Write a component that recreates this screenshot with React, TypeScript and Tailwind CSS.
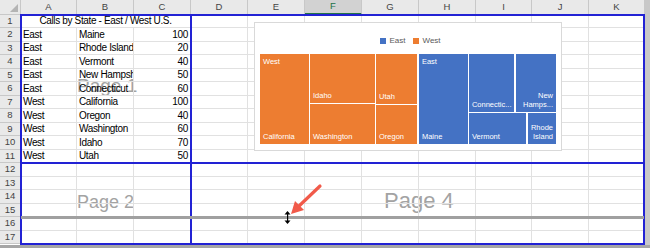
import React from 'react';

const colWidths = ['w-[56px]', 'w-[57px]', 'w-[57px]', 'w-[57px]', 'w-[57px]', 'w-[57px]', 'w-[57px]', 'w-[57px]', 'w-[56px]', 'w-[57px]', 'w-[56px]'];
const letters = ['A', 'B', 'C', 'D', 'E', 'F', 'G', 'H', 'I', 'J', 'K'];

const data: [string, string, number][] = [
  ['East', 'Maine', 100],
  ['East', 'Rhode Island', 20],
  ['East', 'Vermont', 40],
  ['East', 'New Hampshire', 50],
  ['East', 'Connecticut', 60],
  ['West', 'California', 100],
  ['West', 'Oregon', 40],
  ['West', 'Washington', 60],
  ['West', 'Idaho', 70],
  ['West', 'Utah', 50],
];

const rowHeader = 'w-[21px] shrink-0 bg-[#e9e9e9] border-r border-b border-[#c8c8c8] text-[9.5px] text-[#444] flex items-center justify-center';
const cell = 'shrink-0 border-r border-b border-[#e1e1e1] overflow-hidden whitespace-nowrap text-[10px] tracking-[-0.35px] text-black leading-[12px] flex items-end px-[2px]';

const Tile = ({ className, top, bottom, right }: { className: string; top?: string; bottom: React.ReactNode; right?: boolean }) => (
  <div className={`${className} flex flex-col justify-between p-[3px] text-white text-[7.5px] leading-[9px] overflow-hidden`}>
    <span>{top}</span>
    <span className={right ? 'text-right' : ''}>{bottom}</span>
  </div>
);

const Chart = () => (
  <div className="absolute left-[254px] top-[22px] w-[308px] h-[129px] bg-white border border-[#d9d9d9] flex flex-col">
    <div className="pt-[13px] h-[22px] flex justify-center gap-[8px] text-[8px] leading-[9px] text-[#595959] pl-[5px]">
      <span className="flex items-center gap-[3px]"><span className="w-[6px] h-[6px] bg-[#4472c4]" />East</span>
      <span className="flex items-center gap-[3px]"><span className="w-[6px] h-[6px] bg-[#ed7d31]" />West</span>
    </div>
    <div className="mt-[9px] ml-[5px] w-[296px] h-[90px] flex gap-[2px]">
      <div className="w-[160px] flex gap-[1px]">
        <Tile className="w-[49px] bg-[#ed7d31]" top="West" bottom="California" />
        <div className="w-[65px] flex flex-col gap-[1px]">
          <Tile className="h-[49px] bg-[#ed7d31]" bottom="Idaho" />
          <Tile className="flex-1 bg-[#ed7d31]" bottom="Washington" />
        </div>
        <div className="flex-1 flex flex-col gap-[1px]">
          <Tile className="h-[50px] bg-[#ed7d31]" bottom="Utah" />
          <Tile className="flex-1 bg-[#ed7d31]" bottom="Oregon" />
        </div>
      </div>
      <div className="flex-1 flex gap-[1px]">
        <Tile className="w-[49px] bg-[#4472c4]" top="East" bottom="Maine" />
        <div className="flex-1 flex flex-col gap-[1px]">
          <div className="h-[58px] flex gap-[2px]">
            <Tile className="w-[45px] bg-[#4472c4]" bottom="Connectic..." />
            <Tile className="flex-1 bg-[#4472c4]" right bottom={<>New<br />Hamps...</>} />
          </div>
          <div className="flex-1 flex gap-[2px]">
            <Tile className="w-[57px] bg-[#4472c4]" bottom="Vermont" />
            <Tile className="flex-1 bg-[#4472c4]" right bottom={<>Rhode<br />Island</>} />
          </div>
        </div>
      </div>
    </div>
  </div>
);

export default function App() {
  const rows = Array.from({ length: 17 }, (_, i) => i + 1);
  return (
    <div className="relative w-[650px] h-[248px] overflow-hidden bg-[#c8c8c8] font-['Liberation_Sans',Arial,sans-serif]">
      <div className="absolute left-0 top-0 w-[645px] h-[245px] bg-white" />
      {/* page watermarks, under the cell text */}
      <div className="absolute left-[77px] top-[75px] text-[19px] leading-[22px] text-[#a3a3a3]">Page 1</div>
      <div className="absolute left-[77px] top-[191px] text-[18px] leading-[22px] text-[#a3a3a3]">Page 2</div>
      <div className="absolute left-[384px] top-[188px] text-[22px] leading-[26px] text-[#a3a3a3]">Page 4</div>

      <div className="relative w-[645px]">
        <div className="flex h-[15px]">
          <div className="w-[21px] shrink-0 bg-[#e9e9e9] border-r border-b border-[#c8c8c8] relative">
            <div className="absolute right-[2px] bottom-[2px] w-0 h-0 border-l-[8px] border-l-transparent border-b-[8px] border-b-[#b4b4b4]" />
          </div>
          {letters.map((l, i) => (
            <div
              key={l}
              className={`${colWidths[i]} shrink-0 border-r border-[#c8c8c8] text-[9.5px] flex items-center justify-center ${l === 'F' ? 'bg-[#d2d2d2] text-[#217346] border-b-2 border-b-[#217346]' : 'bg-[#e9e9e9] text-[#444] border-b'}`}
            >
              {l}
            </div>
          ))}
        </div>
        {rows.map((r) => (
          <div key={r} className={`flex ${r % 2 === 1 ? 'h-[13px]' : 'h-[14px]'}`}>
            <div className={rowHeader}>{r}</div>
            {r === 1 ? (
              <div className={`${cell} w-[170px] justify-center`}>Calls by State - East / West U.S.</div>
            ) : r <= 11 ? (
              <>
                <div className={`${cell} ${colWidths[0]}`}>{data[r - 2][0]}</div>
                <div className={`${cell} ${colWidths[1]}`}>{data[r - 2][1]}</div>
                <div className={`${cell} ${colWidths[2]} justify-end`}>{data[r - 2][2]}</div>
              </>
            ) : (
              letters.slice(0, 3).map((l, i) => <div key={l} className={`${cell} ${colWidths[i]}`} />)
            )}
            {letters.slice(3).map((l, i) => (
              <div key={l} className={`${cell} ${colWidths[i + 3]}`} />
            ))}
          </div>
        ))}
      </div>

      {/* page break lines */}
      <div className="absolute left-[20px] top-[14px] w-[2px] h-[231px] bg-[#2222d4]" />
      <div className="absolute left-[190px] top-[14px] w-[2px] h-[231px] bg-[#2222d4]" />
      <div className="absolute left-[643px] top-[14px] w-[2px] h-[231px] bg-[#2222d4]" />
      <div className="absolute left-[20px] top-[14px] w-[625px] h-[2px] bg-[#2222d4]" />
      <div className="absolute left-[20px] top-[162px] w-[625px] h-[2px] bg-[#2222d4]" />
      <div className="absolute left-[20px] top-[243px] w-[625px] h-[2px] bg-[#2222d4]" />
      <div className="absolute left-0 top-[245px] w-[650px] h-[3px] bg-[#a6a6a6]" />
      <div className="absolute left-[21px] top-[216px] w-[623px] h-[3px] bg-[#a0a0a0]" />

      <Chart />

      {/* annotation arrow */}
      <svg className="absolute left-[285px] top-[180px]" width="40" height="40" viewBox="0 0 40 40">
        <line x1="35" y1="6" x2="13" y2="27" stroke="#f15a4a" strokeWidth="3.2" strokeLinecap="round" />
        <polygon points="6,34 10,21 19,30" fill="#f15a4a" />
      </svg>
      {/* row resize cursor */}
      <svg className="absolute left-[284px] top-[211px]" width="7" height="13" viewBox="0 0 7 13">
        <polygon points="3.5,0 0.5,3.5 6.5,3.5" fill="#000" />
        <rect x="3" y="3" width="1.2" height="7" fill="#000" />
        <polygon points="3.5,13 0.5,9.5 6.5,9.5" fill="#000" />
      </svg>
    </div>
  );
}
